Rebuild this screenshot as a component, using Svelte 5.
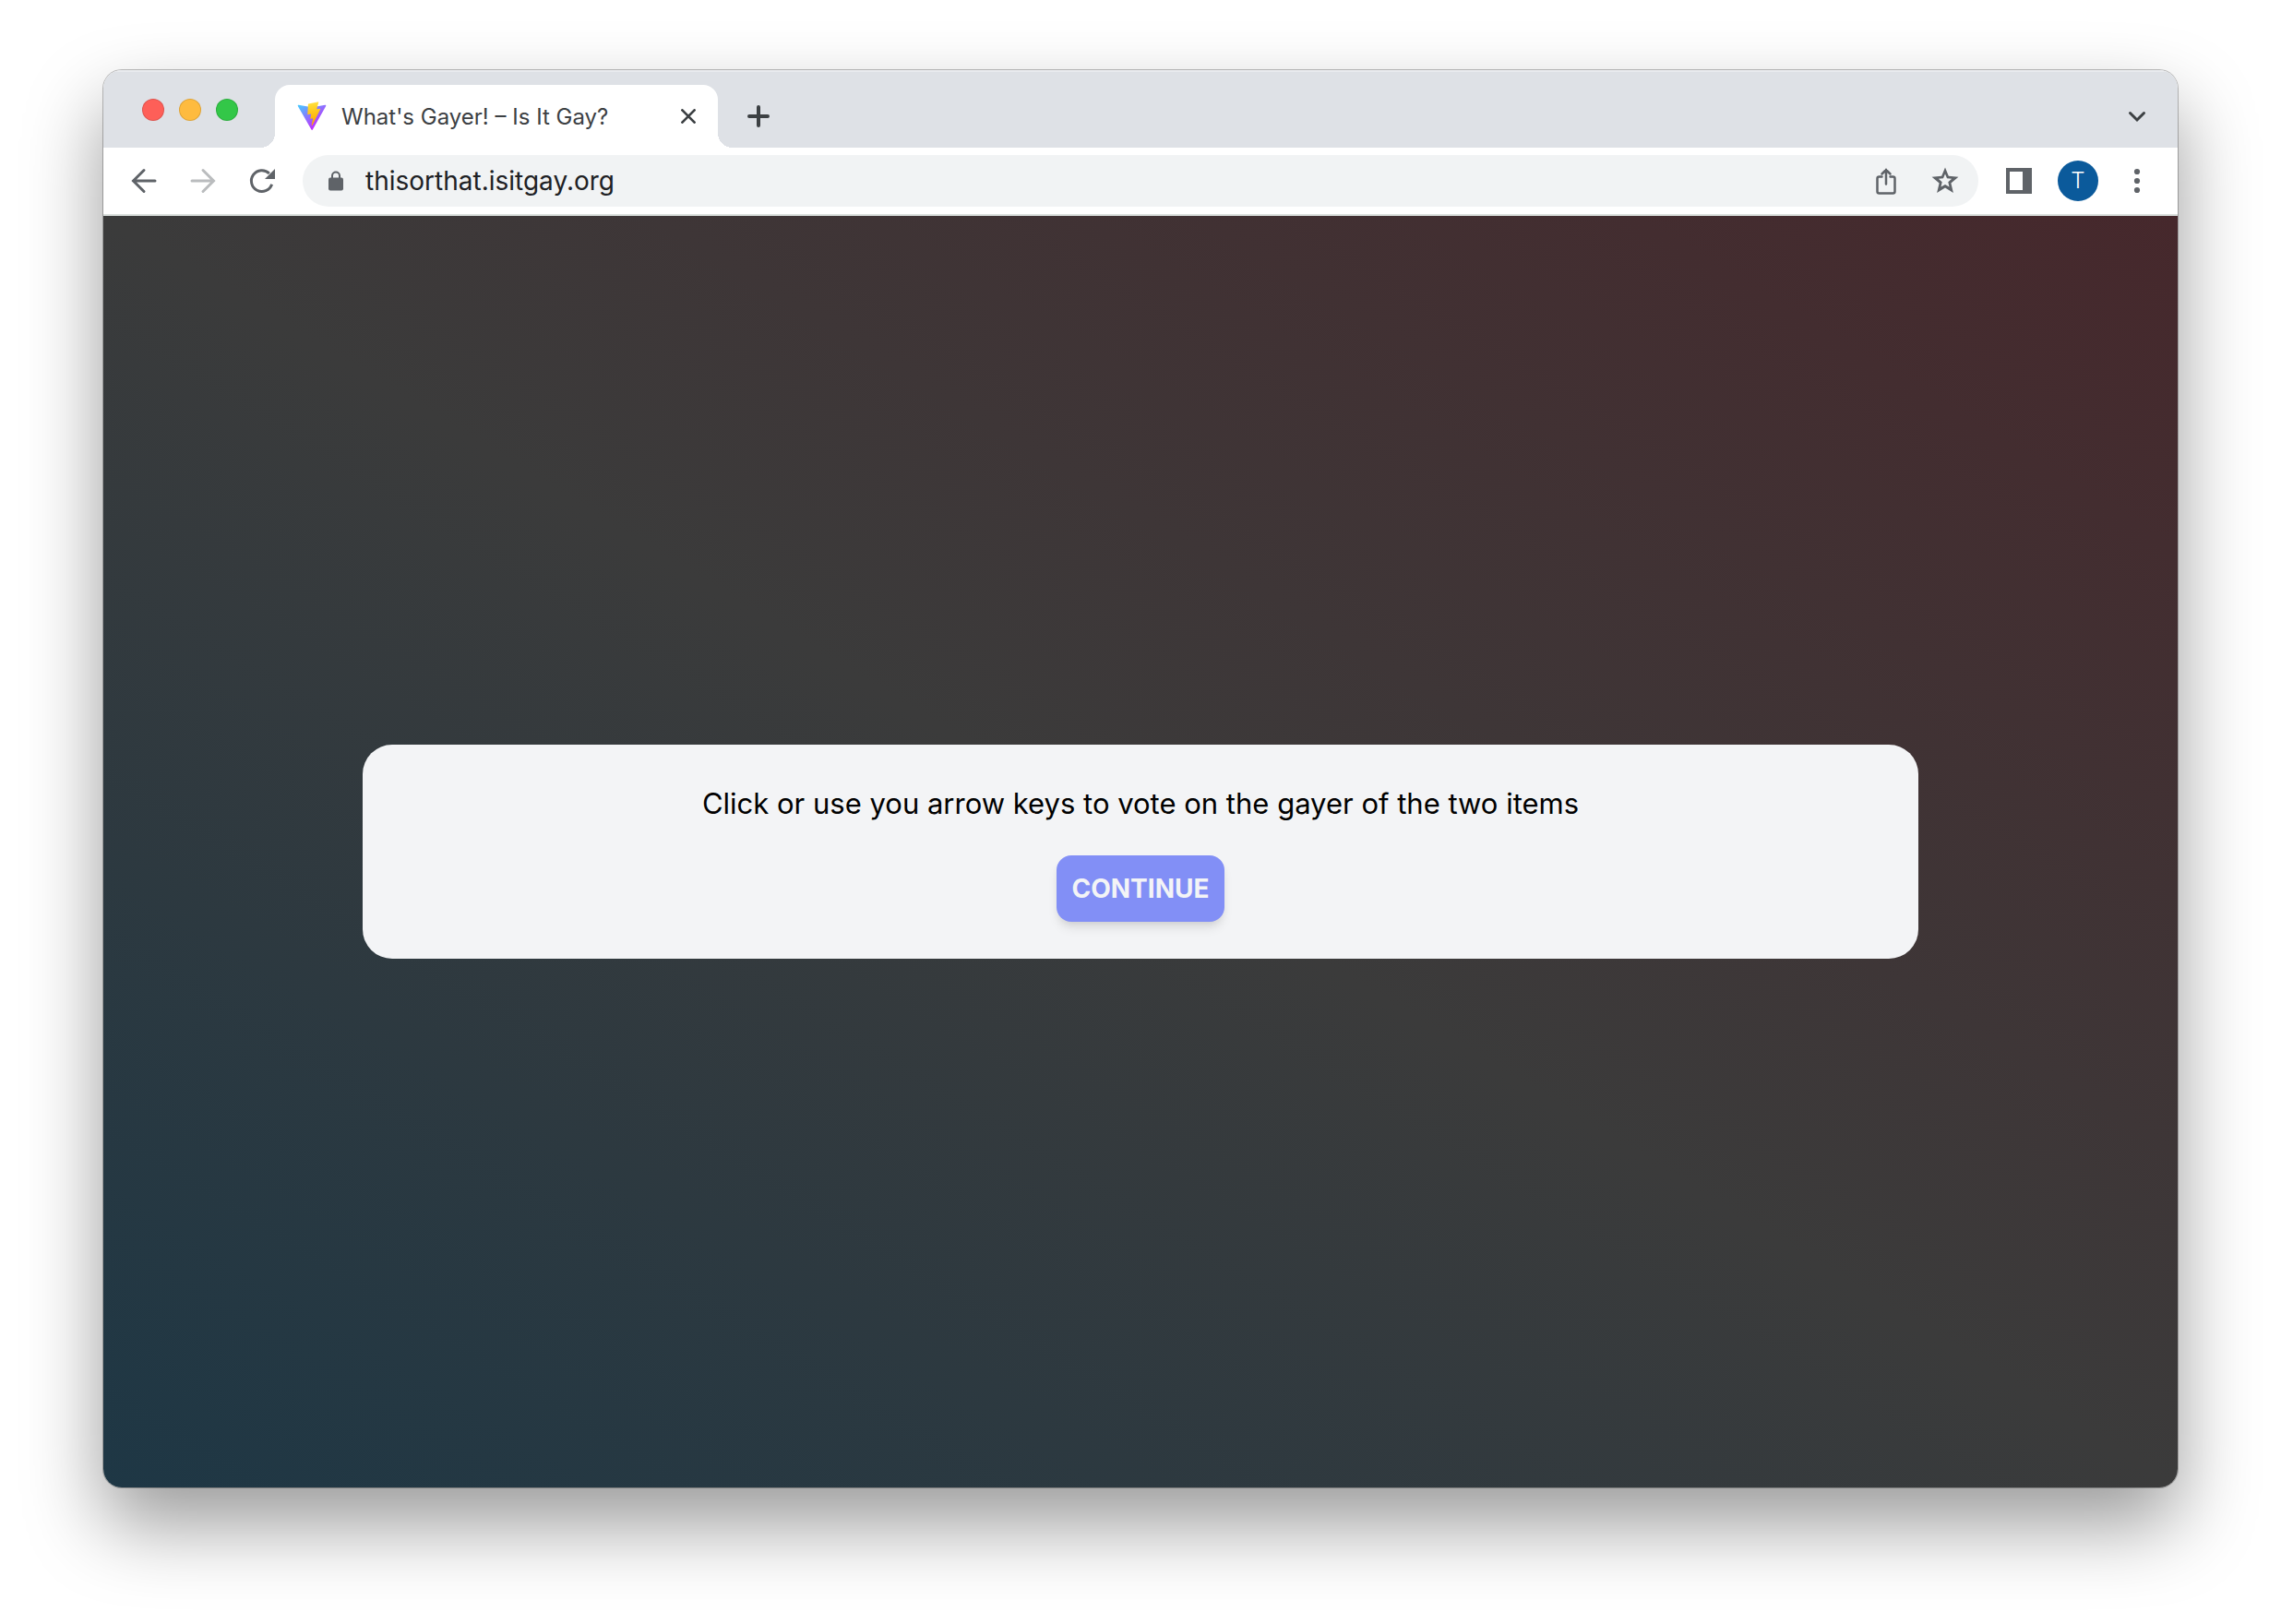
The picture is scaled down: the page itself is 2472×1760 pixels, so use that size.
<script>
  const lights = ['close', 'minimize', 'zoom']

  let address = $state('thisorthat.isitgay.org')
</script>

<main class="desktop">
  <section class="window">
    <header class="tab-strip">
      <div class="lights">
        {#each lights as light}
          <button class="light {light}" aria-label={light}></button>
        {/each}
      </div>

      <div class="tab">
        <svg class="favicon" viewBox="0 0 410 404" aria-hidden="true">
          <defs>
            <linearGradient id="vee" x1="6" y1="33" x2="235" y2="344" gradientUnits="userSpaceOnUse">
              <stop stop-color="#41d1ff" />
              <stop offset="1" stop-color="#bd34fe" />
            </linearGradient>
            <linearGradient id="bolt" x1="194" y1="9" x2="236" y2="293" gradientUnits="userSpaceOnUse">
              <stop stop-color="#ffea83" />
              <stop offset="0.083" stop-color="#ffdd35" />
              <stop offset="1" stop-color="#ffa800" />
            </linearGradient>
          </defs>
          <path
            fill="url(#vee)"
            d="M399.6 59.5L215.6 388.5C211.8 395.3 202.1 395.4 198.2 388.6L10.6 59.6C6.3 52.1 12.7 43 21.2 44.6L205.3 77.5C206.5 77.7 207.7 77.7 208.9 77.5L389.1 44.6C397.6 43.1 404 52 399.6 59.5Z" />
          <path
            fill="url(#bolt)"
            d="M293 1.6L156.8 28.3C154.5 28.7 152.9 30.6 152.8 32.9L144.4 174.3C144.2 177.7 147.2 180.2 150.5 179.5L188.4 170.7C192 169.9 195.2 173 194.4 176.6L183.2 231.7C182.4 235.5 185.9 238.6 189.5 237.5L212.9 230.4C216.6 229.3 220.1 232.5 219.3 236.2L201.4 322.9C200.3 328.3 207.5 331.2 210.5 326.6L212.5 323.5L323.5 102.1C325.3 98.4 322.1 94.2 318 95L279 102.5C275.3 103.2 272.2 99.8 273.2 96.2L298.7 7.9C299.7 4.3 296.6 0.9 293 1.6Z" />
        </svg>
        <span class="title">What's Gayer! – Is It Gay?</span>
        <button class="close-tab" aria-label="Close tab">
          <svg width="16" height="16" viewBox="-8 -8 16 16"><path stroke-width="2.700" d="M-6.600-6.600L6.600 6.600M6.600-6.600L-6.600 6.600" /></svg>
        </button>
      </div>

      <button class="icon dark new-tab" aria-label="New tab">
        <svg width="24" height="24" viewBox="-12 -12 24 24"><path stroke-width="4" d="M-10 0H10M0-10V10" /></svg>
      </button>
      <button class="icon dark" aria-label="Search tabs">
        <svg width="24" height="24" viewBox="-12 -12 24 24"><path d="M-7.500-3.500L0 4L7.500-3.500" /></svg>
      </button>
    </header>

    <nav class="toolbar">
      <button class="icon" aria-label="Back">
        <svg width="32" height="32" viewBox="-16 -16 32 32"><path d="M12 0H-11M0-11.500L-11.500 0L0 11.500" /></svg>
      </button>
      <button class="icon faded" aria-label="Forward" disabled>
        <svg width="32" height="32" viewBox="-16 -16 32 32"><path d="M-12 0H11M0-11.500L11.500 0L0 11.500" /></svg>
      </button>
      <button class="icon reload" aria-label="Reload">
        <svg width="32" height="32" viewBox="-16 -16 32 32">
          <path stroke-linecap="butt" d="M10.600 3.800A11.400 11.400 0 1 1 7.800-8" />
          <path class="solid" d="M14-13V-2H3Z" />
        </svg>
      </button>

      <div class="address">
        <span class="icon">
          <svg width="16" height="22" viewBox="0 0 16 22" aria-hidden="true">
            <path stroke-width="2" d="M4 9V5.500A4 4 0 0 1 12 5.500V9" />
            <rect class="solid" y="7.500" width="16" height="14" rx="2" />
          </svg>
        </span>
        <input type="text" aria-label="Address" bind:value={address} />
        <button class="icon" aria-label="Share">
          <svg width="32" height="32" viewBox="-16 -16 32 32">
            <path stroke-width="2.500" d="M-4.500-4.500H-7.500A2 2 0 0 0-9.500-2.500V11.500A2 2 0 0 0-7.500 13.500H7.500A2 2 0 0 0 9.500 11.500V-2.500A2 2 0 0 0 7.500-4.500H4.500M0 3.500V-12M-4.500-7.500L0-12L4.500-7.500" />
          </svg>
        </button>
        <button class="icon" aria-label="Bookmark">
          <svg width="32" height="32" viewBox="-16 -16 32 32">
            <path
              class="solid"
              fill-rule="evenodd"
              d="M0-14.500L3.800-5.200L14.400-4.300L6.400 2.500L8.900 13L0 7.400L-8.900 13L-6.400 2.500L-14.400-4.300L-3.800-5.200ZM0-7.500L-2-2.800L-7.200-2.300L-3.300 1.200L-4.500 6.600L0 3.900L4.500 6.600L3.300 1.200L7.200-2.300L2-2.800Z" />
          </svg>
        </button>
      </div>

      <button class="icon" aria-label="Side panel">
        <svg width="28" height="28" viewBox="0 0 28 28">
          <path class="solid" fill-rule="evenodd" d="M0 0H28V28H0ZM4 4V24H18V4Z" />
        </svg>
      </button>
      <button class="icon" aria-label="Profile"><span class="avatar">T</span></button>
      <button class="icon" aria-label="Menu">
        <svg width="8" height="28" viewBox="-4 -14 8 28">
          <circle class="solid" cy="-10" r="3.100" />
          <circle class="solid" r="3.100" />
          <circle class="solid" cy="10" r="3.100" />
        </svg>
      </button>
    </nav>

    <div class="page">
      <div class="card">
        <p>Click or use you arrow keys to vote on the gayer of the two items</p>
        <button class="continue">CONTINUE</button>
      </div>
    </div>
  </section>
</main>

<style>
  :global(body) {
    background: #fff;
  }

  .desktop {
    box-sizing: border-box;
    min-height: 100vh;
    padding: 76px 112px 148px;
    display: flex;
    font-family: Inter, Roboto, sans-serif;
  }

  .window {
    flex: 1;
    display: flex;
    flex-direction: column;
    border-radius: 20px;
    overflow: hidden;
    box-shadow:
      0 0 0 1px rgba(0, 0, 0, 0.25),
      0 40px 84px rgba(0, 0, 0, 0.4);
  }

  button {
    border: 0;
    padding: 0;
    background: none;
    font-family: inherit;
  }

  .tab-strip {
    display: flex;
    align-items: center;
    padding: 16px 12px 0 42px;
    background: #dee1e6;
    box-shadow: inset 0 2px 0 #e9ebee;
  }

  .lights {
    display: flex;
    gap: 16px;
    margin: 0 40px 14px 0;
  }

  .light {
    width: 24px;
    height: 24px;
    border-radius: 50%;
    border: 1px solid rgba(0, 0, 0, 0.12);
  }

  .light.close {
    background: #fe5f58;
  }

  .light.minimize {
    background: #febb3f;
  }

  .light.zoom {
    background: #33c748;
  }

  .tab {
    position: relative;
    box-sizing: border-box;
    width: 480px;
    height: 68px;
    padding: 0 24px;
    display: flex;
    align-items: center;
    gap: 16px;
    background: #fff;
    border-radius: 16px 16px 0 0;
  }

  /* curved feet on both sides of the active tab */
  .tab::before,
  .tab::after {
    content: '';
    position: absolute;
    bottom: 0;
    width: 16px;
    height: 16px;
  }

  .tab::before {
    right: 100%;
    background: radial-gradient(circle at 0 0, transparent 16px, #fff 16px);
  }

  .tab::after {
    left: 100%;
    background: radial-gradient(circle at 100% 0, transparent 16px, #fff 16px);
  }

  .favicon {
    width: 32px;
    height: 32px;
  }

  .title {
    flex: 1;
    font-size: 24px;
    white-space: nowrap;
    color: #3c4043;
  }

  svg {
    display: block;
    fill: none;
    stroke: currentColor;
    stroke-width: 3;
    stroke-linecap: round;
  }

  .favicon,
  .solid {
    stroke: none;
  }

  .solid {
    fill: currentColor;
  }

  .close-tab {
    color: #3c4043;
  }

  .icon {
    flex: none;
    width: 64px;
    height: 56px;
    display: flex;
    align-items: center;
    justify-content: center;
    color: #5f6368;
  }

  .icon.dark {
    color: #3c4043;
  }

  .icon.faded {
    color: #babcbe;
  }

  .new-tab {
    margin: 0 auto 0 12px;
  }

  .toolbar {
    display: flex;
    align-items: center;
    padding: 8px 12px;
    background: #fff;
    border-bottom: 2px solid #d9dfdc;
  }

  .address {
    flex: 1;
    display: flex;
    align-items: center;
    margin: 0 12px;
    padding: 0 4px;
    border-radius: 28px;
    background: #f1f3f4;
  }

  .address input {
    flex: 1;
    min-width: 0;
    padding: 0;
    border: 0;
    outline: 0;
    background: none;
    font-family: inherit;
    font-size: 28px;
    color: #202124;
  }

  .avatar {
    width: 44px;
    border-radius: 50%;
    background: #0b5a9b;
    font-size: 24px;
    font-weight: 300;
    line-height: 44px;
    text-align: center;
    color: #fff;
  }

  .page {
    flex: 1;
    display: flex;
    align-items: center;
    justify-content: center;
    background: linear-gradient(to top right, #1e3745, #3b3b3b, #46282c);
  }

  .card {
    box-sizing: border-box;
    width: 75%;
    padding: 40px;
    display: flex;
    flex-direction: column;
    align-items: center;
    gap: 32px;
    border-radius: 32px;
    background: #f3f4f6;
  }

  .card p {
    margin: 0;
    font-size: 31px;
    line-height: 48px;
    color: #000;
  }

  .continue {
    height: 72px;
    padding: 0 16px;
    border-radius: 16px;
    background: #828ff6;
    box-shadow:
      0 8px 12px -2px rgba(0, 0, 0, 0.1),
      0 4px 8px -4px rgba(0, 0, 0, 0.1);
    font-size: 28px;
    font-weight: 700;
    color: #f3f4f6;
  }
</style>
